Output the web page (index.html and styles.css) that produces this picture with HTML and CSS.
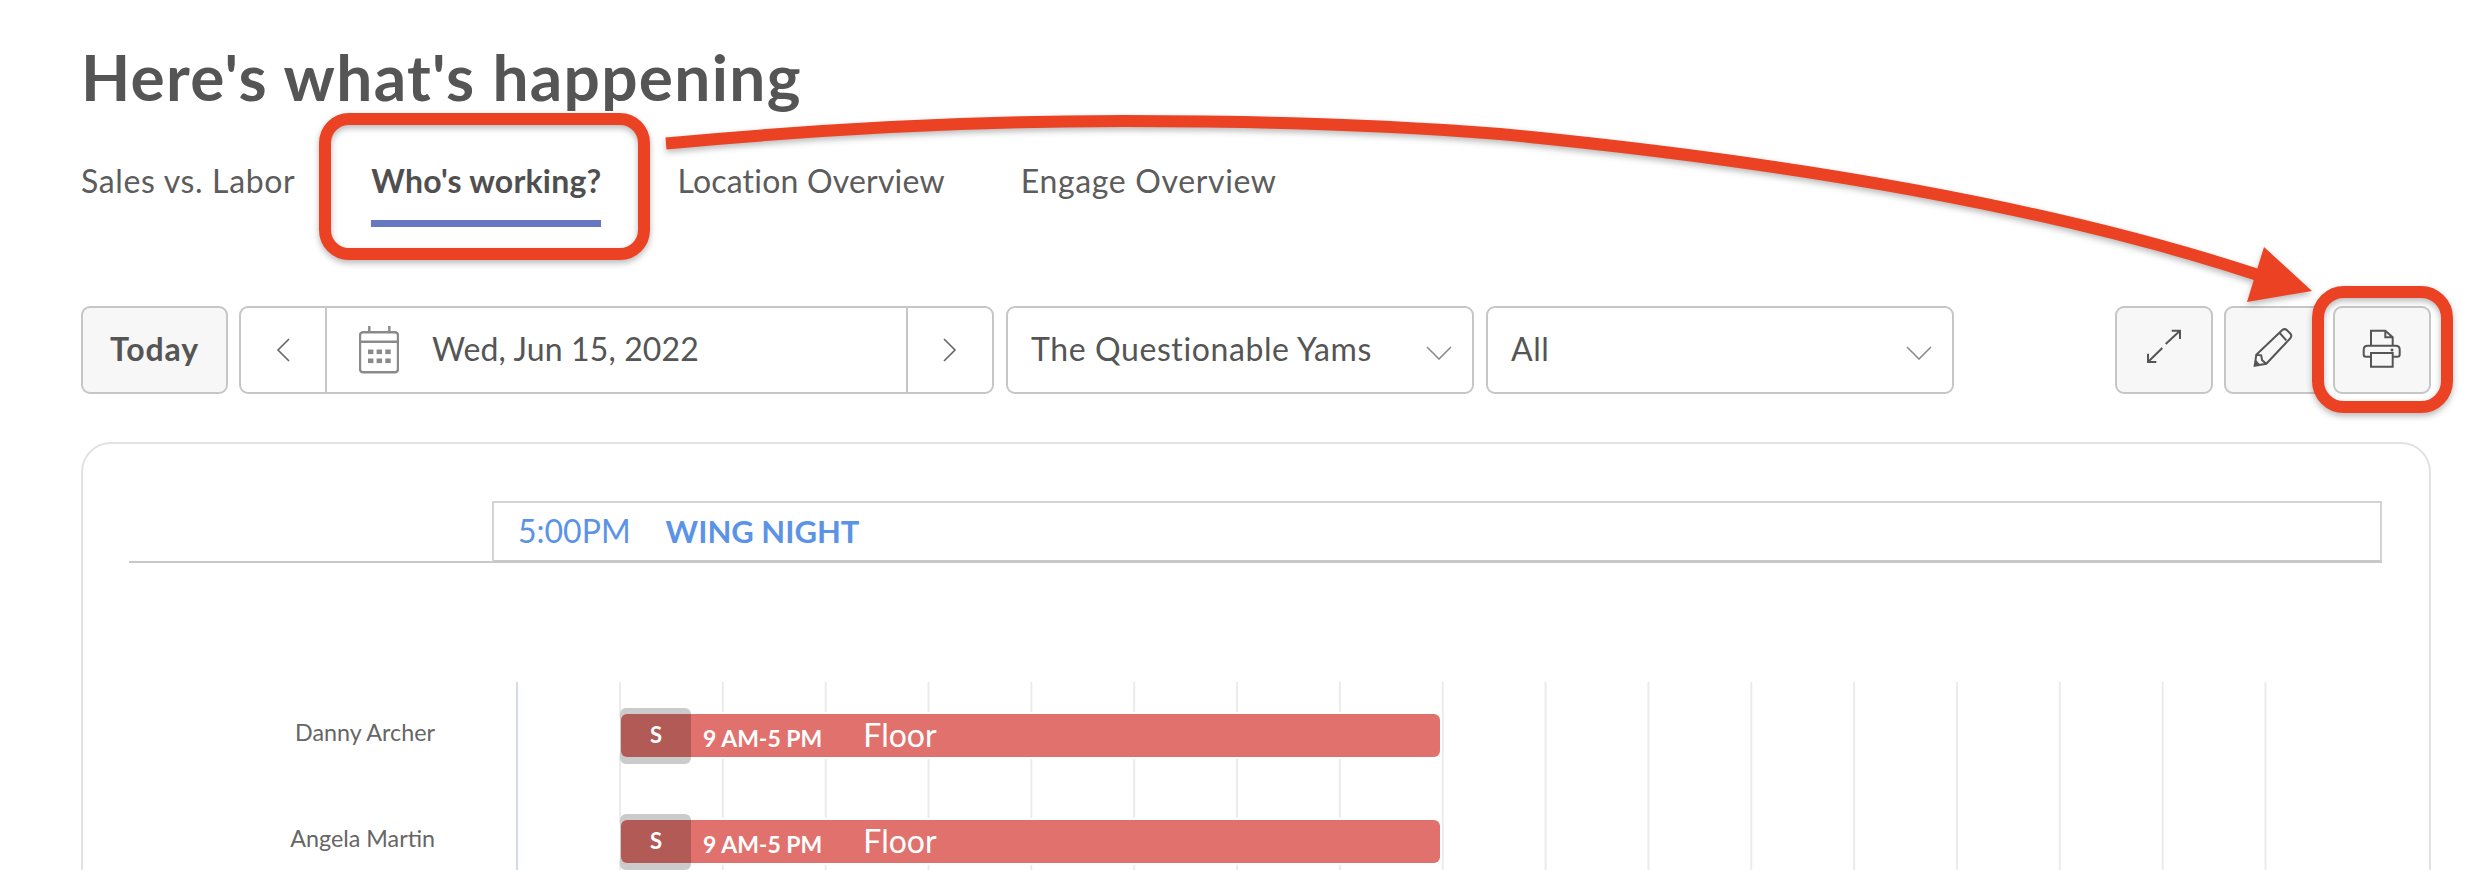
FILE: index.html
```html
<!DOCTYPE html>
<html lang="en">
<head>
<meta charset="utf-8">
<title>Here's what's happening</title>
<link rel="stylesheet" href="styles.css">
</head>
<body>
<main class="page">
  <h1 class="title">Here's what's happening</h1>
  <nav class="tabs">
    <a class="tab">Sales vs. Labor</a>
    <a class="tab tab-active">Who's working?</a>
    <a class="tab tab-tight">Location Overview</a>
    <a class="tab">Engage Overview</a>
  </nav>
  <div class="toolbar">
    <button class="btn btn-today">Today</button>
    <div class="date-group">
      <span class="date-nav">
        <svg class="chev-v" viewBox="0 0 14 24"><path d="M13 1 2 12l11 11"/></svg>
      </span>
      <span class="date-main">
        <svg class="cal" viewBox="0 0 40 50">
          <rect class="cal-line" x="1" y="8.3" width="38" height="40" rx="3"/>
          <path class="cal-line" d="M10.3 2v6M30.3 2v6M1 17.7h38"/>
          <g class="cal-dots">
            <rect x="9" y="25.5" width="5.4" height="4.6"/><rect x="17.6" y="25.5" width="5.4" height="4.6"/><rect x="26.3" y="25.5" width="5.4" height="4.6"/>
            <rect x="9" y="34.5" width="5.4" height="4.6"/><rect x="17.6" y="34.5" width="5.4" height="4.6"/><rect x="26.3" y="34.5" width="5.4" height="4.6"/>
          </g>
        </svg>
        <span>Wed, Jun 15, 2022</span>
      </span>
      <span class="date-nav date-nav-next">
        <svg class="chev-v" viewBox="0 0 14 24"><path d="M1 1l11 11L1 23"/></svg>
      </span>
    </div>
    <div class="select"><span>The Questionable Yams</span><svg class="chev-h" viewBox="0 0 26 14"><path d="M1 1l12 12L25 1"/></svg></div>
    <div class="select"><span>All</span><svg class="chev-h" viewBox="0 0 26 14"><path d="M1 1l12 12L25 1"/></svg></div>
    <div class="actions">
      <button class="btn btn-icon" aria-label="Expand">
        <svg class="ico ico-up" viewBox="0 0 40 36"><path d="M4 33 18.3 19M21.7 15 36 1.7M4 24.7V33h8.3M27.7 1.7H36V10"/></svg>
      </button>
      <button class="btn btn-icon" aria-label="Edit">
        <svg class="ico ico-pencil" viewBox="0 0 44 42"><path d="M3.7 38.7 5.3 27.7 31 3.2q2.7-2.2 5 0l3.3 3.3q2 2.3 0 4.8L15.3 36.7ZM28.7 6l6.6 7.3M5.3 27.7l4.9.6.9 5 4.2 3.4"/><path class="ico-fill" d="M3.7 38.7 4.6 32.5 9 37.4Z"/></svg>
      </button>
      <button class="btn btn-icon" aria-label="Print">
        <svg class="ico ico-print" viewBox="0 0 42 42"><path d="M10 17.7V2.7h14.3l7.4 6.6v8.4M24.3 2.7v6.6h7.4M10 28.7H5q-2.3 0-2.3-2.3v-4.7q0-4 4-4h28q4 0 4 4v4.7q0 2.3-2.3 2.3h-5M10 25h21.7v13.7H10Z"/><circle class="ico-fill" cx="31" cy="22" r="1.5"/></svg>
      </button>
    </div>
  </div>
  <section class="card">
    <div class="events">
      <div class="event"><span class="event-time">5:00PM</span><span class="event-name">WING NIGHT</span></div>
    </div>
    <div class="rows">
      <div class="row">
        <div class="row-name">Danny Archer</div>
        <div class="track">
          <div class="shift">
            <span class="badge"><span class="badge-inner">S</span></span>
            <span class="shift-text"><span class="shift-time">9 AM-5 PM</span><span class="shift-role">Floor</span></span>
          </div>
        </div>
      </div>
      <div class="row">
        <div class="row-name">Angela Martin</div>
        <div class="track">
          <div class="shift">
            <span class="badge"><span class="badge-inner">S</span></span>
            <span class="shift-text"><span class="shift-time">9 AM-5 PM</span><span class="shift-role">Floor</span></span>
          </div>
        </div>
      </div>
    </div>
  </section>
</main>
<svg class="annotations" viewBox="0 0 2476 870" aria-hidden="true">
  <rect class="mark" x="325" y="119" width="319" height="135" rx="24"/>
  <rect class="mark" x="2318" y="292" width="129" height="115" rx="26"/>
  <path class="mark" d="M666 143.5C820 129 970 121 1124 121C1250 121 1375 124 1500 134C1750 158 2030 200 2258 275"/>
  <path class="mark-head" d="M2264 247 2312 291 2247 302Z"/>
</svg>
</body>
</html>
```

FILE: styles.css
```css
* { box-sizing: border-box; }
html, body { margin: 0; padding: 0; height: 870px; overflow: hidden; background: #fff; }
body { font-family: "Lato", "Liberation Sans", sans-serif; color: #555; position: relative; }

.page { height: 870px; overflow: hidden; padding: 41px 45px 0 81px; }

.title { margin: 0; font-size: 64px; line-height: 72px; font-weight: 700; letter-spacing: 1.3px; color: #555; height: 72px; }

.tabs { display: flex; gap: 76px; margin-top: 48px; height: 67px; font-size: 32px; line-height: 40px; letter-spacing: .65px; color: #5c5c5c; }
.tab { display: block; height: 66px; }
.tab-tight { letter-spacing: .2px; }
.tab-active { font-weight: 700; letter-spacing: .2px; color: #4f4f4f; border-bottom: 7px solid #6578c0; }

.toolbar { display: flex; align-items: stretch; height: 88px; margin-top: 78px; }

.btn { font: inherit; color: inherit; background: #f7f7f7; border: 2px solid #c6c6c6; border-radius: 9px; padding: 0; display: flex; align-items: center; justify-content: center; }
.btn-today { width: 147px; font-size: 32px; font-weight: 700; letter-spacing: .9px; margin-right: 11px; color: #555; padding-bottom: 4px; }
.btn-icon { width: 98px; }

.date-group { width: 755px; display: flex; border: 2px solid #c6c6c6; border-radius: 9px; margin-right: 12px; font-size: 32px; letter-spacing: .15px; }
.date-nav { width: 86px; flex: none; display: flex; align-items: center; justify-content: center; border-right: 2px solid #c6c6c6; }
.date-nav-next { border-right: 0; border-left: 2px solid #c6c6c6; }
.date-main { flex: 1; display: flex; align-items: center; gap: 33px; padding-left: 32px; padding-bottom: 4px; }

.chev-v { width: 14px; height: 24px; fill: none; stroke: #666; stroke-width: 1.6; }
.chev-h { width: 26px; height: 14px; fill: none; stroke: #8c8c8c; stroke-width: 1.6; flex: none; margin-top: 10px; }

.cal { width: 40px; height: 50px; flex: none; margin-top: 1px; }
.cal-line { fill: none; stroke: #8a8a8a; stroke-width: 2.4; }
.cal-dots { fill: #8a8a8a; }

.select { width: 468px; display: flex; align-items: center; justify-content: space-between; padding: 0 20px 4px 23px; border: 2px solid #c6c6c6; border-radius: 9px; margin-right: 12px; font-size: 32px; letter-spacing: .6px; }

.actions { margin-left: auto; margin-right: 0; display: flex; gap: 11px; }

.ico { fill: none; stroke: #555; stroke-width: 2; }
.ico-fill { fill: #555; stroke: none; }
.ico-up { width: 40px; height: 36px; margin-top: -6px; }
.ico-pencil { width: 44px; height: 42px; margin-top: -4px; }
.ico-print { width: 42px; height: 42px; margin-top: -2px; }

.card { margin-top: 48px; height: 500px; border: 2px solid #e2e2e2; border-radius: 30px; padding: 57px 47px 0 46px; overflow: hidden; }

.events { height: 62px; padding-left: 363px; border-bottom: 2px solid #c8c8c8; }
.event { height: 62px; display: flex; align-items: center; gap: 35px; padding-left: 24px; padding-bottom: 2px; border: 2px solid #d4d4d4; border-bottom: 3px solid #c8c8c8; font-size: 32px; color: #5b93e6; }
.event-name { font-weight: 700; font-size: 31px; }

.rows { margin-top: 119px; }
.row { display: flex; height: 106px; }
.row-name { width: 387px; flex: none; padding: 35px 81px 0 0; text-align: right; font-size: 23.3px; line-height: 30px; color: #666; }
.track { width: 1784px; flex: none; padding: 32px 0 0 103px; border-left: 2px solid #d4dcec;
  background-image: linear-gradient(90deg, #ebebeb 2px, transparent 2px);
  background-size: 102.85px 100%;
  background-position: 101px 0;
  background-repeat: repeat-x;
}

.shift { width: 819px; height: 43px; display: flex; align-items: center; background: #e0716d; border-radius: 6px; box-shadow: 0 0 0 2px #fff; color: #fff; }
.badge { flex: none; width: 71px; height: 56px; margin-left: -1px; display: flex; align-items: center; background: #cbcbcb; border-radius: 6px; }
.badge-inner { width: 70px; height: 43px; margin-left: 1px; display: flex; align-items: center; justify-content: center; padding-bottom: 3px; background: #b25a56; border-radius: 6px 0 0 6px; font-size: 22px; font-weight: 700; }
.shift-text { display: flex; align-items: baseline; gap: 41px; margin-left: 12px; padding-bottom: 3px; }
.shift-time { font-size: 23px; font-weight: 700; }
.shift-role { font-size: 32px; font-weight: 400; }

.annotations { position: absolute; left: 0; top: 0; width: 2476px; height: 870px; pointer-events: none; filter: drop-shadow(0 3px 3px rgba(0,0,0,.28)); }
.mark { fill: none; stroke: #ec4224; stroke-width: 12; }
.mark-head { fill: #ec4224; }
```
